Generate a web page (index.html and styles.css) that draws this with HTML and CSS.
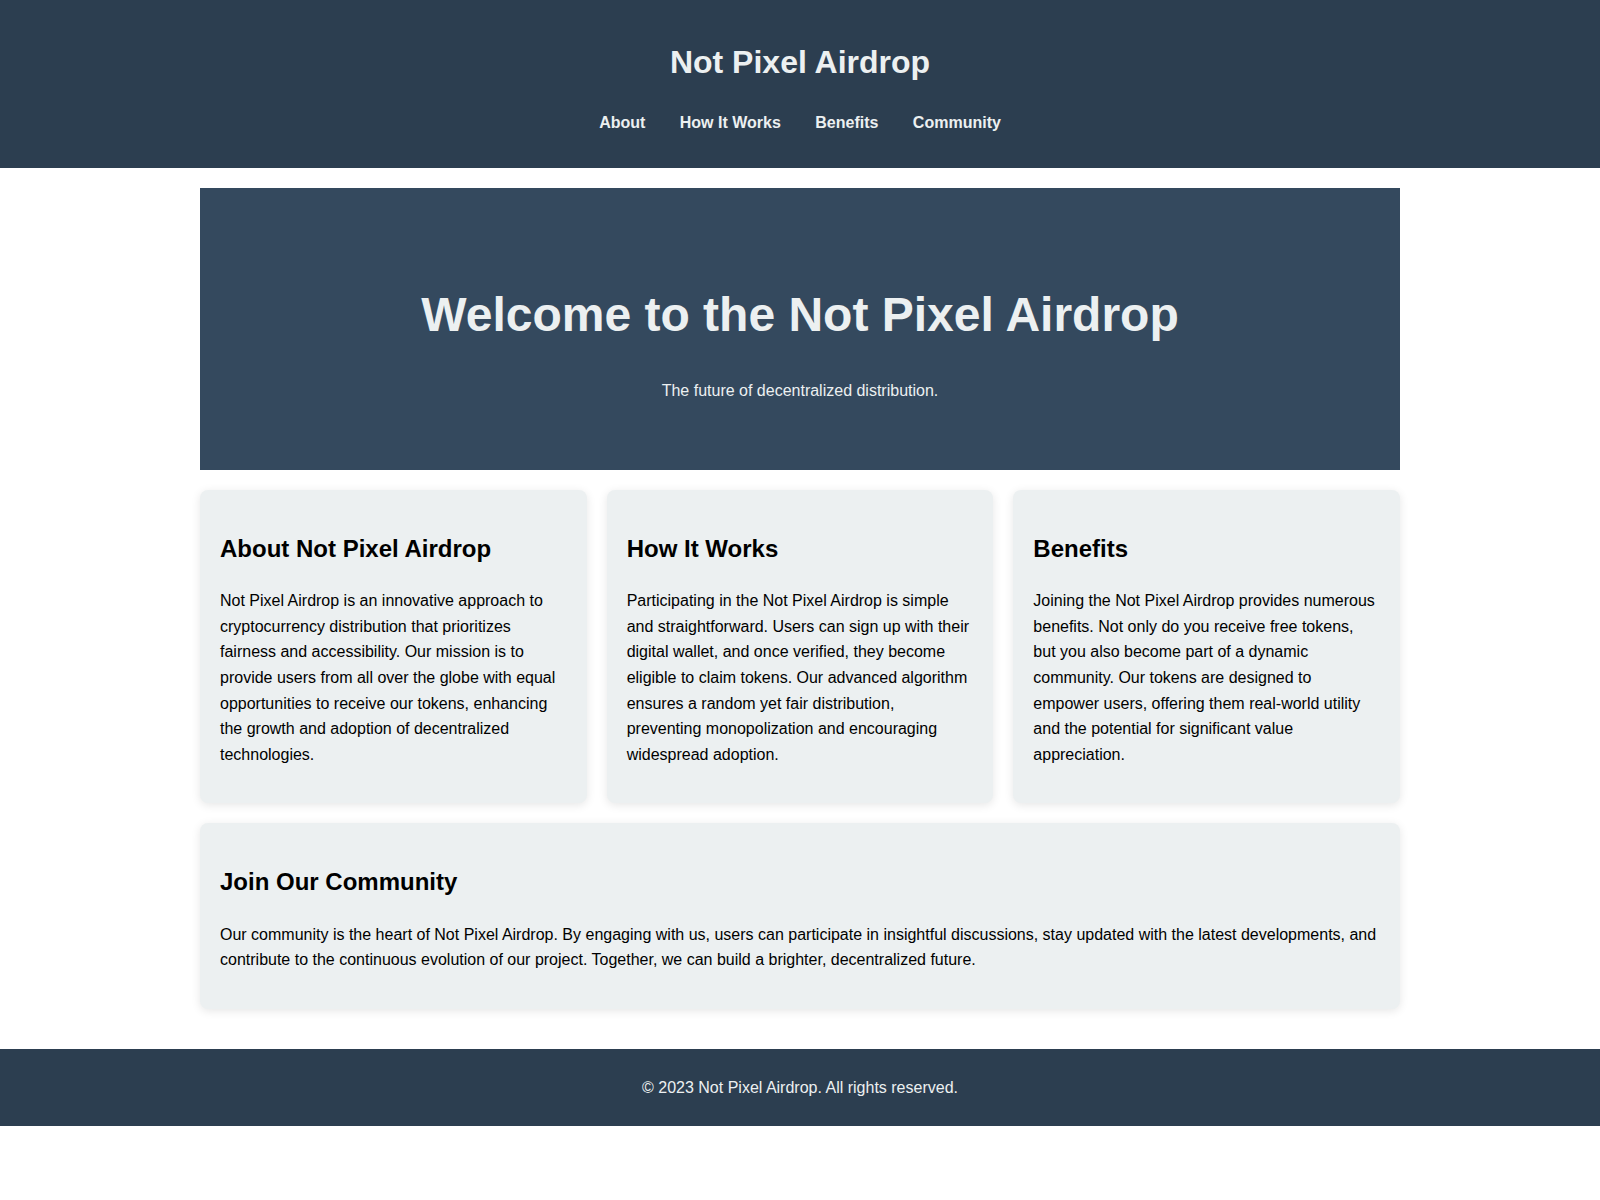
FILE: index.html
```html
<!DOCTYPE html>
<html lang="en">
<head>
    <meta charset="UTF-8">
    <meta name="viewport" content="width=device-width, initial-scale=1.0">
    <title>Not Pixel Airdrop</title>
    <link rel="stylesheet" href="styles.css">
</head>
<body>
    <header class="site-header">
        <h1>Not Pixel Airdrop</h1>
        <nav>
            <ul class="nav-list">
                <li><a href="#about">About</a></li>
                <li><a href="#how-it-works">How It Works</a></li>
                <li><a href="#benefits">Benefits</a></li>
                <li><a href="#community">Community</a></li>
            </ul>
        </nav>
    </header>

    <main class="container">
        <section class="hero">
            <h1>Welcome to the Not Pixel Airdrop</h1>
            <p>The future of decentralized distribution.</p>
        </section>

        <div class="features">
            <section class="card" id="about">
                <h2>About Not Pixel Airdrop</h2>
                <p>Not Pixel Airdrop is an innovative approach to cryptocurrency distribution that prioritizes fairness and accessibility. Our mission is to provide users from all over the globe with equal opportunities to receive our tokens, enhancing the growth and adoption of decentralized technologies.</p>
            </section>

            <section class="card" id="how-it-works">
                <h2>How It Works</h2>
                <p>Participating in the Not Pixel Airdrop is simple and straightforward. Users can sign up with their digital wallet, and once verified, they become eligible to claim tokens. Our advanced algorithm ensures a random yet fair distribution, preventing monopolization and encouraging widespread adoption.</p>
            </section>

            <section class="card" id="benefits">
                <h2>Benefits</h2>
                <p>Joining the Not Pixel Airdrop provides numerous benefits. Not only do you receive free tokens, but you also become part of a dynamic community. Our tokens are designed to empower users, offering them real-world utility and the potential for significant value appreciation.</p>
            </section>
        </div>

        <section class="card community" id="community">
            <h2>Join Our Community</h2>
            <p>Our community is the heart of Not Pixel Airdrop. By engaging with us, users can participate in insightful discussions, stay updated with the latest developments, and contribute to the continuous evolution of our project. Together, we can build a brighter, decentralized future.</p>
        </section>
    </main>

    <footer class="site-footer">
        <p>&copy; 2023 Not Pixel Airdrop. All rights reserved.</p>
    </footer>
</body>
</html>
```

FILE: styles.css
```css
:root {
    --dark-blue: #2c3e50;
    --hero-blue: #34495e;
    --light: #ecf0f1;
}

body {
    font-family: "Liberation Sans", Arial, sans-serif;
    line-height: 1.6;
    color: #000;
    background-color: #fff;
    margin: 0;
    padding: 0;
}

.site-header {
    background-color: var(--dark-blue);
    color: var(--light);
    text-align: center;
    padding: 1rem 0;
}

.site-header h1 {
    font-size: 2em;
    margin: 0.67em 0;
}

.nav-list {
    list-style: none;
    padding: 0;
    margin: 1rem 0;
}

.nav-list li {
    display: inline;
    margin: 0 15px;
}

.nav-list a {
    color: var(--light);
    text-decoration: none;
    font-weight: bold;
}

.container {
    max-width: 1200px;
    margin: 20px auto;
}

.hero {
    background-color: var(--hero-blue);
    color: var(--light);
    text-align: center;
    padding: 50px 20px 66px;
    margin-bottom: 20px;
}

.hero h1 {
    font-size: 48px;
    margin: 39px 0 25px;
}

.hero p {
    margin: 0;
}

.features {
    display: grid;
    grid-template-columns: repeat(3, 1fr);
    gap: 20px;
    margin-bottom: 20px;
}

.card {
    background-color: var(--light);
    border-radius: 8px;
    padding: 20px;
    box-shadow: 0 2px 10px rgba(0, 0, 0, 0.1);
}

.card h2 {
    font-size: 1.5em;
    margin: 0.83em 0;
}

.community {
    margin-bottom: 40px;
}

.site-footer {
    background-color: var(--dark-blue);
    color: var(--light);
    text-align: center;
    padding: 10px 0;
}
```
